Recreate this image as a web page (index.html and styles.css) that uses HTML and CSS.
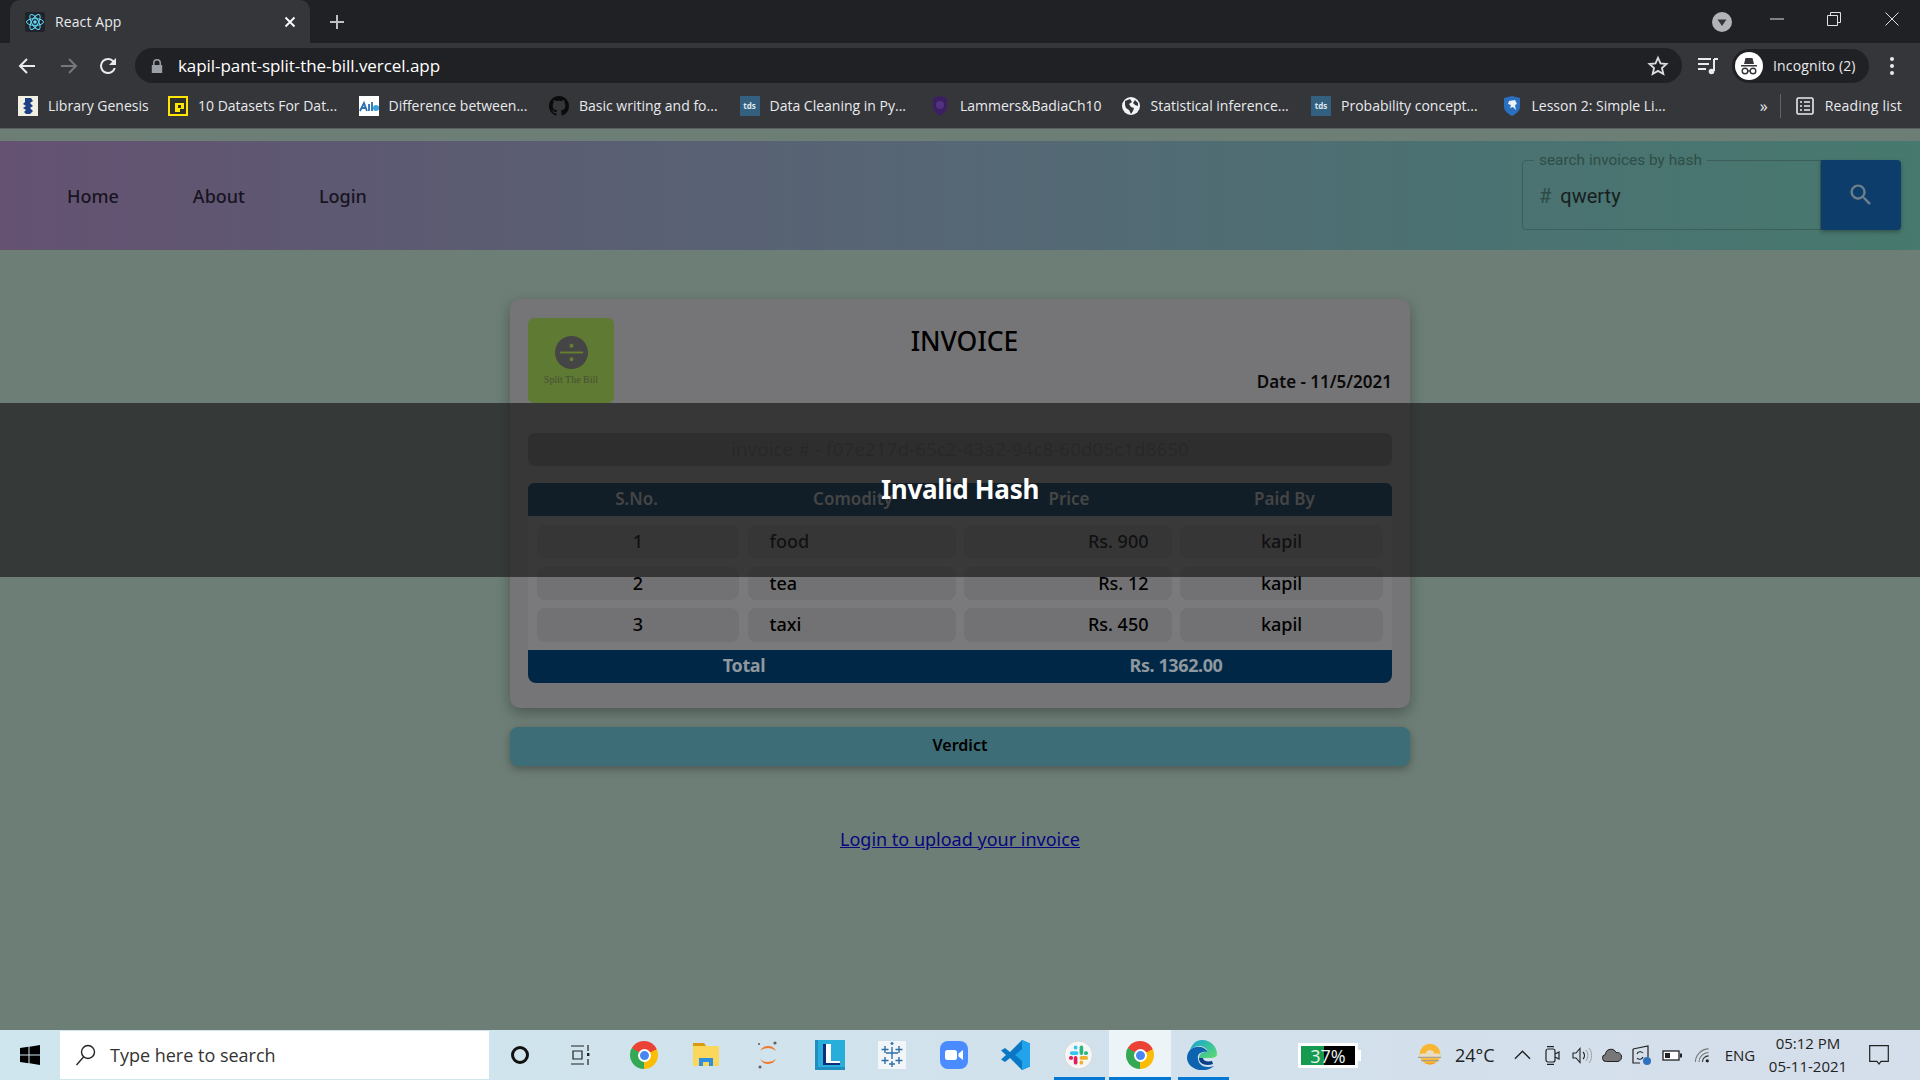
FILE: index.html
```html
<!DOCTYPE html>
<html>
<head>
    <title>React App</title>
    <link rel="stylesheet" href="styles.css">
</head>
<body>
    <div class="tabstrip">
        <div class="tab">
            <svg class="favicon" viewBox="0 0 20 20"><rect width="20" height="20" rx="2" fill="#20232a"/><circle cx="10" cy="10" r="1.8" fill="#61dafb"/><g fill="none" stroke="#61dafb" stroke-width="1"><ellipse cx="10" cy="10" rx="8.5" ry="3.4"/><ellipse cx="10" cy="10" rx="8.5" ry="3.4" transform="rotate(60 10 10)"/><ellipse cx="10" cy="10" rx="8.5" ry="3.4" transform="rotate(120 10 10)"/></g></svg>
            <span class="tab-title">React App</span>
            <svg class="tab-close" viewBox="0 0 12 12"><path d="M1.5 1.5l9 9M10.5 1.5l-9 9" stroke="#fff" stroke-width="1.8"/></svg>
        </div>
        <svg class="new-tab" viewBox="0 0 16 16"><path d="M8 1v14M1 8h14" stroke="#bdc1c6" stroke-width="2"/></svg>
        <svg class="tab-search" viewBox="0 0 20 20"><circle cx="10" cy="10" r="10" fill="#b3b4b7"/><path d="M5.5 7.5h9L10 14z" fill="#35363a"/></svg>
        <div class="win-btn"><svg width="14" height="14" viewBox="0 0 14 14"><path d="M0 7h14" stroke="#dfe1e5" stroke-width="1"/></svg></div>
        <div class="win-btn"><svg width="14" height="14" viewBox="0 0 14 14"><path d="M.5 3.5h10v10H.5zM3.5 3.5v-3h10v10h-3" fill="none" stroke="#dfe1e5"/></svg></div>
        <div class="win-btn"><svg width="14" height="14" viewBox="0 0 14 14"><path d="M.5.5l13 13M13.5.5l-13 13" stroke="#dfe1e5"/></svg></div>
    </div>

    <div class="toolbar">
        <div class="tool-btn"><svg width="18" height="18" viewBox="0 0 18 18"><path d="M17 9H2M9 2L2 9l7 7" fill="none" stroke="#e8eaed" stroke-width="2"/></svg></div>
        <div class="tool-btn"><svg width="18" height="18" viewBox="0 0 18 18"><path d="M1 9h15M9 2l7 7-7 7" fill="none" stroke="#75777a" stroke-width="2"/></svg></div>
        <div class="tool-btn reload"><svg width="24" height="24" viewBox="0 0 24 24"><path fill="#e8eaed" d="M17.65 6.35A7.96 7.96 0 0 0 12 4a8 8 0 1 0 7.73 10h-2.08A6 6 0 1 1 12 6c1.66 0 3.14.69 4.22 1.78L13 11h7V4l-2.35 2.35z"/></svg></div>
        <div class="omnibox">
            <svg class="lock" viewBox="0 0 12 14"><path d="M2 6V4a4 4 0 0 1 8 0v2h1.2v8H.8V6zm1.5 0h5V4a2.5 2.5 0 0 0-5 0z" fill="#9aa0a6"/></svg>
            <span class="url">kapil-pant-split-the-bill.vercel.app</span>
            <svg class="star" viewBox="0 0 24 24"><path d="M12 3l2.7 6.1 6.6.7-5 4.4 1.5 6.5-5.8-3.4-5.8 3.4 1.5-6.5-5-4.4 6.6-.7z" fill="none" stroke="#dadce0" stroke-width="2"/></svg>
        </div>
        <div class="tool-btn media"><svg width="20" height="20" viewBox="0 0 20 20"><path d="M0 3h13M0 8h11M0 13h8" stroke="#e8eaed" stroke-width="1.8"/><path d="M16 3h4M16 3v12" stroke="#e8eaed" stroke-width="2" fill="none"/><circle cx="13.5" cy="15.5" r="2.8" fill="#e8eaed"/></svg></div>
        <div class="profile">
            <svg class="avatar" viewBox="0 0 28 28"><circle cx="14" cy="14" r="14" fill="#fff"/><path d="M9 12l1.5-6h7l1.5 6zM6 13h16v1.5H6z" fill="#35363a"/><g fill="none" stroke="#35363a" stroke-width="1.4"><circle cx="10" cy="19" r="2.8"/><circle cx="18" cy="19" r="2.8"/><path d="M12.8 19h2.4"/></g></svg>
            <span>Incognito (2)</span>
        </div>
        <div class="tool-btn menu-dots"><svg width="6" height="20" viewBox="0 0 6 20"><circle cx="3" cy="3" r="2" fill="#e8eaed"/><circle cx="3" cy="10" r="2" fill="#e8eaed"/><circle cx="3" cy="17" r="2" fill="#e8eaed"/></svg></div>
    </div>

    <div class="bookmarks">
        <div class="bookmark bookmark-first">
            <svg class="bm-icon" viewBox="0 0 20 20"><rect width="20" height="20" fill="#f1efe2"/><path d="M7 2h6l2 3-3 2 3 3-3 2 3 3-3 3H8l-2-2 2-2-3-2 3-2-3-2 2-2z" fill="#1c3f86"/></svg>
            <span>Library Genesis</span>
        </div>
        <div class="bookmark">
            <svg class="bm-icon" viewBox="0 0 20 20"><rect width="20" height="20" fill="#ffe600"/><rect x="2" y="2" width="16" height="16" fill="#2f2f2b"/><path d="M7 7h9v6h-4v3H7z" fill="#ffe600"/><rect x="10" y="9" width="3" height="3" fill="#2f2f2b"/></svg>
            <span>10 Datasets For Dat...</span>
        </div>
        <div class="bookmark">
            <svg class="bm-icon" viewBox="0 0 20 20"><rect width="20" height="20" fill="#fff"/><path d="M1 15L5 7l3 8M3 12h4M10 8v7M13 6v9" stroke="#2a6fb0" stroke-width="1.8" fill="none"/><circle cx="17" cy="12" r="3" fill="#37a3dc"/></svg>
            <span>Difference between...</span>
        </div>
        <div class="bookmark">
            <svg class="bm-icon" viewBox="0 0 16 16"><path fill="#0b0b0c" d="M8 0C3.58 0 0 3.58 0 8c0 3.54 2.29 6.53 5.47 7.59.4.07.55-.17.55-.38 0-.19-.01-.82-.01-1.49-2.01.37-2.53-.49-2.69-.94-.09-.23-.48-.94-.82-1.13-.28-.15-.68-.52-.01-.53.63-.01 1.08.58 1.23.82.72 1.21 1.87.87 2.33.66.07-.52.28-.87.51-1.07-1.78-.2-3.64-.89-3.64-3.95 0-.87.31-1.59.82-2.15-.08-.2-.36-1.02.08-2.12 0 0 .67-.21 2.2.82.64-.18 1.32-.27 2-.27.68 0 1.36.09 2 .27 1.53-1.04 2.2-.82 2.2-.82.44 1.1.16 1.92.08 2.12.51.56.82 1.27.82 2.15 0 3.07-1.87 3.75-3.65 3.95.29.25.54.73.54 1.48 0 1.07-.01 1.93-.01 2.2 0 .21.15.46.55.38A8.013 8.013 0 0016 8c0-4.42-3.58-8-8-8z"/></svg>
            <span>Basic writing and fo...</span>
        </div>
        <div class="bookmark">
            <div class="tds-icon">tds</div>
            <span>Data Cleaning in Py...</span>
        </div>
        <div class="bookmark">
            <svg class="bm-icon" viewBox="0 0 20 20"><path d="M3 2l7-2 7 2v9c0 4-4 7-7 9-3-2-7-5-7-9z" fill="#3b1f62"/><circle cx="10" cy="9" r="4" fill="#53317f"/></svg>
            <span>Lammers&amp;BadiaCh10</span>
        </div>
        <div class="bookmark">
            <svg class="bm-icon" viewBox="0 0 20 20"><circle cx="10" cy="10" r="9" fill="#f1f3f4"/><path d="M4 5l5-2 2 3-3 2 2 3 3 1-1 3-2 3-2-4-3-2-1-3zM14 4l3 3v3l-3-1-2-2z" fill="#35363a"/></svg>
            <span>Statistical inference...</span>
        </div>
        <div class="bookmark">
            <div class="tds-icon">tds</div>
            <span>Probability concept...</span>
        </div>
        <div class="bookmark">
            <svg class="bm-icon" viewBox="0 0 20 20"><path d="M2 2l8-2 8 2v9c0 4-4 7-8 9-4-2-8-5-8-9z" fill="#2a6fc0"/><path d="M7 5l6-1 2 4-2 1 1 5-3-3-3 1 1-3-3-1z" fill="#eaf1f8"/></svg>
            <span>Lesson 2: Simple Li...</span>
        </div>
        <div class="bookmarks-end">
            <span class="more">»</span>
            <div class="bm-divider"></div>
            <svg class="reading-icon" viewBox="0 0 18 18"><rect x="1" y="1" width="16" height="16" rx="1.5" fill="none" stroke="#e8eaed" stroke-width="1.6"/><path d="M4 5h2M8 5h6M4 9h2M8 9h6M4 13h2M8 13h6" stroke="#e8eaed" stroke-width="1.5"/></svg>
            <span class="reading-label">Reading list</span>
        </div>
    </div>

    <div class="page">
        <div class="nav">
            <div class="nav-links">
                <a>Home</a>
                <a>About</a>
                <a>Login</a>
            </div>
            <div class="search">
                <fieldset class="search-field">
                    <legend>search invoices by hash</legend>
                    <span class="hash">#</span>
                    <span class="query">qwerty</span>
                </fieldset>
                <div class="search-btn"><svg width="28" height="28" viewBox="0 0 24 24"><path fill="#6f7f8b" d="M15.5 14h-.79l-.28-.27C15.41 12.59 16 11.11 16 9.5 16 5.91 13.09 3 9.5 3S3 5.91 3 9.5 5.91 16 9.5 16c1.61 0 3.09-.59 4.23-1.57l.27.28v.79l5 4.99L20.49 19l-4.99-5zm-6 0C7.01 14 5 11.99 5 9.5S7.01 5 9.5 5 14 7.01 14 9.5 11.99 14 9.5 14z"/></svg></div>
            </div>
        </div>

        <div class="main">
            <div class="card">
                <div class="invoice-head">
                    <div class="logo">
                        <svg class="logo-mark" viewBox="0 0 34 34"><circle cx="17" cy="17" r="17" fill="#454545"/><path d="M5 17h24" stroke="#66802f" stroke-width="2"/><circle cx="17" cy="10" r="2" fill="#66802f"/><circle cx="17" cy="24" r="2" fill="#66802f"/></svg>
                        <div class="logo-name">Split The Bill</div>
                    </div>
                    <div class="head-text">
                        <div class="invoice-title">INVOICE</div>
                        <div class="invoice-date">Date - 11/5/2021</div>
                    </div>
                </div>
                <div class="invoice-hash">invoice # - f07e217d-65c2-43a2-94c8-60d05c1d8650</div>
                <div class="table">
                    <div class="table-head">
                        <div>S.No.</div>
                        <div>Comodity</div>
                        <div>Price</div>
                        <div>Paid By</div>
                    </div>
                    <div class="table-body">
                        <div class="cell">1</div><div class="cell cell-left">food</div><div class="cell cell-right">Rs. 900</div><div class="cell">kapil</div>
                        <div class="cell">2</div><div class="cell cell-left">tea</div><div class="cell cell-right">Rs. 12</div><div class="cell">kapil</div>
                        <div class="cell">3</div><div class="cell cell-left">taxi</div><div class="cell cell-right">Rs. 450</div><div class="cell">kapil</div>
                    </div>
                    <div class="table-total">
                        <div>Total</div>
                        <div>Rs. 1362.00</div>
                    </div>
                </div>
            </div>
            <div class="verdict">Verdict</div>
            <a class="upload-link">Login to upload your invoice</a>
        </div>

        <div class="toast">Invalid Hash</div>
    </div>

    <div class="taskbar">
        <div class="start"><svg width="20" height="20" viewBox="0 0 20 20"><path d="M0 3l8.5-1.2v7.7H0zM9.5 1.7L20 0v9.5H9.5zM0 10.5h8.5v7.7L0 17zM9.5 10.5H20V20L9.5 18.3z" fill="#000"/></svg></div>
        <div class="task-search">
            <svg width="22" height="22" viewBox="0 0 22 22"><circle cx="13" cy="8" r="6.5" fill="none" stroke="#222" stroke-width="1.4"/><path d="M8.5 13L1.5 21" stroke="#222" stroke-width="1.4"/></svg>
            <span>Type here to search</span>
        </div>
        <div class="slot"><div class="cortana"></div></div>
        <div class="slot"><svg class="task-view" width="21" height="20" viewBox="0 0 21 20"><path d="M1 1h13M1 19h13M3 6h9v8H3zM18 0v6M18 14v6" fill="none" stroke="#222" stroke-width="1.2"/><rect x="17" y="8" width="2.4" height="3" fill="#222"/></svg></div>
        <div class="slot"><div class="chrome"></div></div>
        <div class="slot"><svg width="28" height="24" viewBox="0 0 28 24"><path d="M1 0h11l2 3H1z" fill="#d79a10"/><rect x="1" y="3" width="26" height="20" fill="#fbd75b"/><path d="M7 23v-8h14v8h-4v-4h-6v4z" fill="#2f8ee0"/></svg></div>
        <div class="slot"><svg width="22" height="28" viewBox="0 0 22 28"><path d="M3 10a9 9 0 0 1 16 0 12 12 0 0 0-16 0zM3 18a9 9 0 0 0 16 0 12 12 0 0 1-16 0z" fill="#f37726"/><circle cx="18" cy="2" r="1.6" fill="#616161"/><circle cx="2" cy="3" r="1.1" fill="#616161"/><circle cx="3" cy="26" r="1.5" fill="#616161"/></svg></div>
        <div class="slot"><svg width="30" height="30" viewBox="0 0 30 30"><rect width="30" height="30" fill="#29aedb"/><path d="M0 0h3v27h27v3H0z" fill="#1f8fc0"/><path d="M8 4h6v17h11v4H8z" fill="#0b2f7a"/><path d="M11 4h5v17h9v2H11z" fill="#fff"/></svg></div>
        <div class="slot"><svg width="28" height="28" viewBox="0 0 28 28"><rect width="28" height="28" fill="#f2f6f8"/><path d="M14 6v12M8 12h12M7 5v7M3.5 8.5h7M21 5v7M17.5 8.5h7M7 16v7M3.5 19.5h7M21 16v7M17.5 19.5h7M14 20v6M11 23h6M14 1v3M12.5 2.500h3" stroke="#2f6fa8" stroke-width="1.4"/></svg></div>
        <div class="slot"><svg width="28" height="28" viewBox="0 0 28 28"><rect width="28" height="28" rx="8" fill="#4a8cff"/><rect x="5" y="9" width="12" height="10" rx="2.5" fill="#fff"/><path d="M18.5 12.5l4.5-3.5v10l-4.5-3.5z" fill="#fff"/></svg></div>
        <div class="slot"><svg width="30" height="30" viewBox="0 0 30 30"><path d="M21 0L9 12 4 8 0 10.5 5 15 0 19.5 4 22l5-4 12 12 8-3.5V3.500z" fill="#0a78c5"/><path d="M21 0l8 3.5v23L21 30v-9l-7-6 7-6z" fill="#22a3ec"/></svg></div>
        <div class="slot"><svg width="29" height="30" viewBox="0 0 30 30"><circle cx="15" cy="15" r="14.5" fill="#f5f6f6" stroke="#d4d6d8"/><g stroke-width="3.8" stroke-linecap="round" fill="none"><path d="M8 13h5M12 7v.5" stroke="#36c5f0"/><path d="M18 7v6M23 13h-.5" stroke="#2eb67d"/><path d="M18 18h5M18 23v-.5" stroke="#ecb22e"/><path d="M12 18v5M7 18h.5" stroke="#e01e5a"/></g></svg></div>
        <div class="slot slot-active"><div class="chrome"></div></div>
        <div class="slot">
            <svg width="30" height="30" viewBox="0 0 30 30"><defs><linearGradient id="edgeTop" x1="0" y1="0" x2="1" y2="1"><stop offset="0" stop-color="#13a5d6"/><stop offset="1" stop-color="#5fdc6c"/></linearGradient></defs><path d="M15 0c9 0 15 7 15 14 0 3-3 4-7 4H12c0-5 5-7 9-6C19 6 11 3 3 10 5 4 9 0 15 0z" fill="url(#edgeTop)"/><path d="M3 10c-6 7-3 17 9 20 6 1 12-1 15-4-7 2-15 1-16-7-1-5 3-8 10-7C17 6 9 5 3 10z" fill="#0d63b0"/><path d="M12 18c0 7 8 8 14 6l-1-3c-5 1-9 0-9-3z" fill="#0a3f87"/></svg>
        </div>
        <div class="tray">
            <div class="battery-widget"><span>37%</span></div>
            <svg class="weather" viewBox="0 0 30 30"><circle cx="15" cy="14" r="13" fill="#f7b733"/><path d="M10 13a5 4 0 0 1 10 0h5a3 3 0 0 1 0 6H5a3 3 0 0 1 0-6z" fill="#e9dcc4"/><path d="M0 18h29M4 22h22" stroke="#a79f90" stroke-width="1.5"/><path d="M8 25a9 5 0 0 0 14 0z" fill="#f59c2a"/></svg>
            <span class="temp">24°C</span>
            <div class="tray-slot"><svg width="17" height="10" viewBox="0 0 18 10"><path d="M1 9l8-8 8 8" fill="none" stroke="#222" stroke-width="1.4"/></svg></div>
            <div class="tray-slot"><svg width="15" height="19" viewBox="0 0 15 19"><rect x="1" y="3" width="9" height="13" rx="2" fill="none" stroke="#222" stroke-width="1.2"/><path d="M10 8l4-2v7l-4-2M2 .6h7M2 18.4h7" fill="none" stroke="#222" stroke-width="1.2"/></svg></div>
            <div class="tray-slot"><svg width="20" height="17" viewBox="0 0 20 17"><path d="M1 6h3l4-4.5v14L4 11H1zM11 5c2 2 2 5 0 7" fill="none" stroke="#222" stroke-width="1.1"/><path d="M14 3c2.5 3 2.5 8 0 11M17 1c3.5 4 3.5 11 0 15" fill="none" stroke="#9a9ea3" stroke-width="1"/></svg></div>
            <div class="tray-slot"><svg width="20" height="14" viewBox="0 0 20 14"><path d="M4.5 13.5a3.5 3.5 0 0 1-1-7 5.5 5.5 0 0 1 10.5-2 4.5 4.5 0 0 1 2 9z" fill="#777" stroke="#222"/></svg></div>
            <div class="tray-slot"><svg width="20" height="20" viewBox="0 0 20 20"><path d="M1 4l15-3v11M1 4v14h7" fill="none" stroke="#222" stroke-width="1.2"/><path d="M5 9a3.5 3.5 0 0 1 6-1M11 12a3.5 3.5 0 0 1-6 1" fill="none" stroke="#222" stroke-width="1.1"/><circle cx="15" cy="16" r="4" fill="#2f73c0"/></svg></div>
            <div class="tray-slot"><svg width="20" height="11" viewBox="0 0 20 11"><rect x="1" y="1" width="16" height="9" fill="#fff" stroke="#222" stroke-width="1.3"/><rect x="3" y="3" width="5" height="5" fill="#222"/><rect x="18" y="3.5" width="2" height="4" fill="#222"/></svg></div>
            <div class="tray-slot"><svg width="16" height="15" viewBox="0 0 17 17"><path d="M1 16C1 8 8 1 16 1M5 16c0-6 5-11 11-11" fill="none" stroke="#777" stroke-width="1.2"/><path d="M9 16c0-4 3-7 7-7" fill="none" stroke="#333" stroke-width="1.3"/><circle cx="14.5" cy="14.5" r="1.8" fill="#222"/></svg></div>
            <span class="lang">ENG</span>
            <div class="clock"><div>05:12 PM</div><div>05-11-2021</div></div>
            <div class="notif"><svg width="20" height="20" viewBox="0 0 20 20"><path d="M.7.7h18.6v15.6H12L10 19l-2-2.7H.7z" fill="none" stroke="#222" stroke-width="1.2"/></svg></div>
        </div>
    </div>
</body>
</html>
```

FILE: styles.css
```css
html, body {
    margin: 0;
    padding: 0;
}

body {
    width: 1920px;
    height: 1080px;
    overflow: hidden;
    display: flex;
    flex-direction: column;
    font-family: 'Open Sans', 'Noto Sans', sans-serif;
    background-color: #6d7e76;
    color: #111;
}

/* browser chrome */
.tabstrip {
    height: 43px;
    flex: none;
    display: flex;
    align-items: center;
    padding-left: 10px;
    background-color: #202124;
    color: #e8eaed;
}

.tab {
    width: 300px;
    height: 43px;
    box-sizing: border-box;
    display: flex;
    align-items: center;
    padding: 0 14px 0 15px;
    background-color: #35363a;
    border-radius: 10px 10px 0 0;
}

.favicon {
    width: 20px;
    height: 20px;
}

.tab-title {
    margin-left: 10px;
    font-size: 14px;
    letter-spacing: 0.1px;
    flex: 1;
}

.tab-close {
    width: 12px;
    height: 12px;
}

.new-tab {
    width: 16px;
    height: 16px;
    margin-left: 19px;
}

.tab-search {
    width: 20px;
    height: 20px;
    margin-left: auto;
    margin-right: 16px;
    margin-top: 1px;
}

.win-btn {
    width: 57px;
    height: 38px;
    margin-top: -5px;
    display: flex;
    align-items: center;
    justify-content: center;
}

.win-btn:last-child {
    margin-left: 1px;
}

.toolbar {
    height: 35px;
    flex: none;
    display: flex;
    align-items: center;
    padding: 5px 0 0 6px;
    background-color: #35363a;
}

.tool-btn {
    width: 42px;
    display: flex;
    justify-content: center;
}

.reload {
    width: 36px;
    margin-right: 9px;
}

.media {
    width: 36px;
    margin-left: 8px;
    margin-right: 6px;
}

.menu-dots {
    width: 46px;
}

.omnibox {
    width: 1547px;
    height: 35px;
    box-sizing: border-box;
    display: flex;
    align-items: center;
    padding: 0 13px 0 16px;
    background-color: #202124;
    border-radius: 18px;
}

.lock {
    width: 12px;
    height: 14px;
}

.url {
    margin-left: 15px;
    font-size: 17px;
    letter-spacing: -0.06px;
    color: #fff;
    flex: 1;
}

.star {
    width: 22px;
    height: 22px;
}

.profile {
    width: 137px;
    height: 34px;
    box-sizing: border-box;
    display: flex;
    align-items: center;
    padding-left: 3px;
    background-color: #202124;
    border-radius: 17px;
    font-size: 14px;
    letter-spacing: 0.15px;
    color: #e8eaed;
}

.avatar {
    width: 28px;
    height: 28px;
    margin-right: 10px;
}

.bookmarks {
    height: 46px;
    flex: none;
    box-sizing: border-box;
    display: flex;
    align-items: center;
    padding: 0 18px;
    background-color: #35363a;
    border-bottom: 1px solid #5b5d60;
    font-size: 14px;
    color: #e8eaed;
}

.bookmark {
    width: 190.5px;
    flex: none;
    display: flex;
    align-items: center;
    white-space: nowrap;
}

.bookmark-first {
    width: 150px;
}

.bm-icon {
    width: 20px;
    height: 20px;
    margin-right: 10px;
    flex: none;
}

.tds-icon {
    width: 20px;
    height: 20px;
    margin-right: 10px;
    flex: none;
    display: flex;
    align-items: center;
    justify-content: center;
    background-color: #34607f;
    color: #dfe8ee;
    font-size: 8px;
    font-weight: 700;
}

.bookmarks-end {
    margin-left: auto;
    display: flex;
    align-items: center;
}

.more {
    font-size: 16px;
    margin-right: 12px;
}

.bm-divider {
    width: 1px;
    height: 24px;
    background-color: #5f6368;
    margin-right: 15px;
}

.reading-icon {
    width: 18px;
    height: 18px;
    margin-right: 11px;
}

.reading-label {
    letter-spacing: 0.2px;
}

/* page */
.page {
    flex: 1;
    position: relative;
    background-color: #6d7e76;
    font-family: 'Noto Sans', sans-serif;
}

.nav {
    height: 109px;
    margin-top: 12px;
    display: flex;
    align-items: center;
    justify-content: space-between;
    padding: 0 19px 0 67px;
    background: linear-gradient(90deg, #655272 0%, #5c5a72 21%, #566775 50%, #4b7172 75%, #47796e 100%);
}

.nav-links {
    display: flex;
    gap: 74px;
    font-size: 18px;
    font-weight: 500;
    color: #17141f;
}

.search {
    display: flex;
    height: 70px;
    margin-top: -1px;
}

.search-field {
    width: 299px;
    height: 70px;
    box-sizing: border-box;
    margin: 0;
    padding: 2px 16px 0;
    display: flex;
    align-items: center;
    font-family: Roboto, sans-serif;
    border: 1px solid #3c6059;
    border-radius: 4px 0 0 4px;
}

.search-field legend {
    height: 1px;
    line-height: 1px;
    padding: 0 5px;
    margin-left: -5px;
    font-size: 15.4px;
    color: #2f4d47;
}

.hash {
    font-size: 20px;
    color: #2f4a45;
    margin-right: 9px;
}

.query {
    font-size: 20px;
    color: #16201e;
}

.search-btn {
    width: 80px;
    display: flex;
    align-items: center;
    justify-content: center;
    background-color: #0d3d6b;
    border-radius: 0 4px 4px 0;
    box-shadow: 0 2px 4px rgba(0,0,0,0.3);
}

.main {
    width: 900px;
    margin: 49px auto 0;
    text-align: center;
}

.card {
    height: 409px;
    box-sizing: border-box;
    padding: 19px 18px 0;
    background-color: #757577;
    border-radius: 10px;
    box-shadow: 0 5px 14px rgba(0,0,0,0.3);
}

.invoice-head {
    display: flex;
    height: 85px;
}

.logo {
    width: 86px;
    height: 85px;
    flex: none;
    background-color: #5f7a32;
    border-radius: 6px;
    padding-top: 18px;
    box-sizing: border-box;
}

.logo-mark {
    width: 33px;
    height: 33px;
    display: block;
    margin: 0 auto;
}

.logo-name {
    margin-top: 5px;
    font-family: 'Liberation Serif', serif;
    font-size: 10px;
    color: #474f37;
}

.head-text {
    flex: 1;
    margin-left: -77px;
}

.invoice-title {
    margin-top: 6px;
    font-size: 26.5px;
    font-weight: 500;
    line-height: 34px;
    color: #000;
}

.invoice-date {
    margin-top: 12px;
    text-align: right;
    font-size: 17px;
    font-weight: 600;
    line-height: 24px;
    color: #0a0a0a;
}

.invoice-hash {
    height: 33px;
    line-height: 33px;
    margin-top: 30px;
    font-size: 18.9px;
    color: #484848;
    background-color: #5a5a5c;
    border-radius: 6px;
}

.table {
    margin-top: 17px;
}

.table-head {
    height: 33px;
    line-height: 32px;
    display: grid;
    grid-template-columns: 217px 216px 216px 215px;
    font-size: 17px;
    font-weight: 600;
    color: #9f9f9f;
    background-color: #002745;
    border-radius: 6px 6px 0 0;
}

.table-body {
    display: grid;
    grid-template-columns: 202px 208px 207.5px 203px;
    gap: 8px 8.5px;
    padding: 9px 9px 8px;
    background-color: #7a7a7c;
}

.cell {
    height: 33.5px;
    line-height: 32px;
    font-size: 18px;
    font-weight: 500;
    color: #000;
    background-color: #727274;
    border-radius: 8px;
}

.cell-left {
    text-align: left;
    padding-left: 22px;
}

.cell-right {
    text-align: right;
    padding-right: 23px;
}

.table-total {
    height: 33px;
    line-height: 31px;
    display: grid;
    grid-template-columns: 1fr 1fr;
    font-size: 18px;
    font-weight: 700;
    letter-spacing: -0.4px;
    color: #8f989f;
    background-color: #002745;
    border-radius: 0 0 8px 8px;
}

.verdict {
    height: 39px;
    line-height: 37px;
    margin-top: 19px;
    font-size: 16px;
    font-weight: 600;
    color: #000;
    background-color: #3d6d76;
    border-radius: 8px;
    box-shadow: 0 3px 8px rgba(0,0,0,0.3);
}

.upload-link {
    display: inline-block;
    margin-top: 60px;
    font-size: 18px;
    line-height: 26px;
    color: #07077f;
    text-decoration: underline;
}

.toast {
    position: absolute;
    left: 0;
    right: 0;
    top: 274px;
    height: 174px;
    box-sizing: border-box;
    padding-bottom: 3px;
    display: flex;
    align-items: center;
    justify-content: center;
    font-size: 26px;
    font-weight: 700;
    letter-spacing: -0.3px;
    color: #fff;
    background-color: rgba(25,25,25,0.67);
}

/* windows taskbar */
.taskbar {
    height: 50px;
    flex: none;
    display: flex;
    align-items: center;
    background: linear-gradient(90deg, #cfe6ef 0%, #d1e2ec 50%, #d5deeb 100%);
}

.start {
    width: 60px;
    display: flex;
    justify-content: center;
}

.task-search {
    width: 429px;
    height: 48px;
    box-sizing: border-box;
    display: flex;
    align-items: center;
    padding-left: 15px;
    background-color: #fff;
    font-size: 18px;
    color: #333;
}

.task-search span {
    margin-left: 13px;
}

.slot {
    width: 62px;
    height: 50px;
    flex: none;
    position: relative;
    display: flex;
    align-items: center;
    justify-content: center;
}

.slot-active {
    background-color: #edf4f8;
}

.task-view {
    margin-right: 4px;
}

/* little running-app bar under the taskbar icons */
.slot:nth-child(12)::after,
.slot-active::after,
.slot-active + .slot::after {
    content: "";
    position: absolute;
    left: 7px;
    right: 4px;
    bottom: 0;
    height: 3px;
    background-color: #0078d4;
}

.slot-active::after {
    left: 0;
    right: 0;
}

.cortana {
    width: 12px;
    height: 12px;
    border: 3.5px solid #111;
    border-radius: 50%;
}

.chrome {
    width: 28px;
    height: 28px;
    border-radius: 50%;
    position: relative;
    background: conic-gradient(#ea4335 0deg 65deg, #fbbc05 65deg 180deg, #34a853 180deg 300deg, #ea4335 300deg 360deg);
}

.chrome::after {
    content: "";
    position: absolute;
    left: 7.5px;
    top: 7.5px;
    width: 9px;
    height: 9px;
    background-color: #4a86f0;
    border: 2.5px solid #fff;
    border-radius: 50%;
}

.tray {
    margin-left: auto;
    padding-right: 15px;
    display: flex;
    align-items: center;
}

.battery-widget {
    width: 60px;
    height: 25px;
    box-sizing: border-box;
    position: relative;
    text-align: center;
    line-height: 20px;
    font-size: 18px;
    color: #e8f4f0;
    border: 3px solid #fff;
    background: linear-gradient(90deg, #169a4f 0 42%, #000 42% 100%);
    margin-right: 60px;
}

.battery-widget::after {
    content: "";
    position: absolute;
    right: -6px;
    top: 4px;
    width: 3px;
    height: 11px;
    background-color: #fff;
}

.weather {
    width: 24px;
    height: 24px;
    margin-right: 13px;
}

.temp {
    width: 52px;
    font-size: 18px;
    color: #222;
}

.tray-slot {
    width: 30px;
    display: flex;
    justify-content: center;
}

.lang {
    width: 46px;
    text-align: center;
    font-size: 15px;
    color: #222;
}

.clock {
    width: 90px;
    text-align: center;
    font-size: 15px;
    line-height: 23px;
    color: #222;
}

.notif {
    width: 52px;
    display: flex;
    justify-content: center;
}
```
